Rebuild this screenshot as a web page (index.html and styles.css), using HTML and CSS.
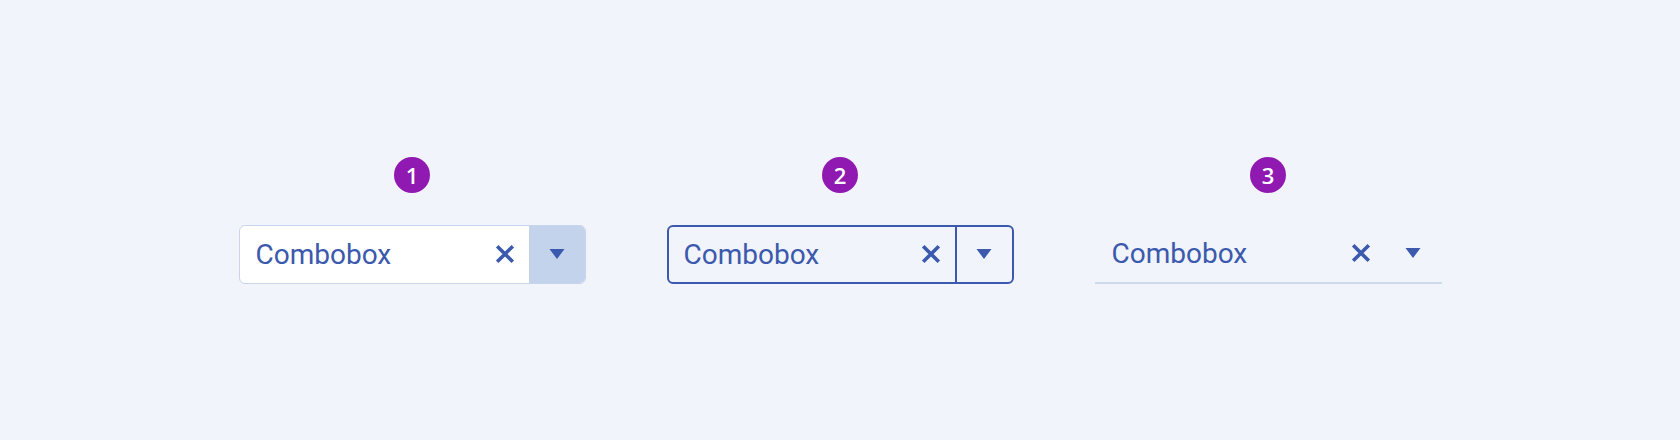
FILE: index.html
```html
<!DOCTYPE html>
<html lang="en">
<head>
<meta charset="utf-8">
<title>Combobox variants</title>
<link rel="stylesheet" href="styles.css">
</head>
<body>
<main class="stage">
  <section class="item">
    <span class="badge">1</span>
    <div class="combo combo--solid">
      <span class="combo__value">Combobox</span>
      <svg class="combo__clear" viewBox="0 0 20 20" width="20" height="20"><path d="M2.2 2.2 L17.8 17.8 M17.8 2.2 L2.2 17.8"/></svg>
      <span class="combo__toggle"><svg viewBox="0 0 16 10" width="16" height="10"><polygon points="0.5,0 15.5,0 8,10"/></svg></span>
    </div>
  </section>
  <section class="item">
    <span class="badge">2</span>
    <div class="combo combo--outline">
      <span class="combo__value">Combobox</span>
      <svg class="combo__clear" viewBox="0 0 20 20" width="20" height="20"><path d="M2.2 2.2 L17.8 17.8 M17.8 2.2 L2.2 17.8"/></svg>
      <span class="combo__toggle"><svg viewBox="0 0 16 10" width="16" height="10"><polygon points="0.5,0 15.5,0 8,10"/></svg></span>
    </div>
  </section>
  <section class="item">
    <span class="badge">3</span>
    <div class="combo combo--flat">
      <span class="combo__value">Combobox</span>
      <svg class="combo__clear" viewBox="0 0 20 20" width="20" height="20"><path d="M2.2 2.2 L17.8 17.8 M17.8 2.2 L2.2 17.8"/></svg>
      <span class="combo__toggle"><svg viewBox="0 0 16 10" width="16" height="10"><polygon points="0.5,0 15.5,0 8,10"/></svg></span>
    </div>
  </section>
</main>
</body>
</html>
```

FILE: styles.css
```css
html, body {
  margin: 0;
  padding: 0;
}

body {
  background: #f1f4fa;
  font-family: Roboto, "Liberation Sans", sans-serif;
}

.stage {
  height: 440px;
  display: flex;
  align-items: center;
  justify-content: center;
  gap: 81px;
}

.item {
  width: 347px;
  display: flex;
  flex-direction: column;
  align-items: center;
  gap: 32px;
}

.badge {
  width: 36px;
  height: 36px;
  border-radius: 50%;
  background: #9019b1;
  color: #ffffff;
  font-family: "Open Sans", "Noto Sans", sans-serif;
  font-size: 22px;
  font-weight: 600;
  line-height: 36px;
  text-align: center;
}

.combo {
  box-sizing: border-box;
  width: 347px;
  height: 59px;
  display: flex;
  align-items: stretch;
  color: #3b59ad;
}

.combo__value {
  flex: 1;
  display: flex;
  align-items: center;
  padding-left: 16px;
  padding-top: 1px;
  font-size: 28px;
  line-height: 1;
}

.combo__clear {
  align-self: center;
  margin-right: 14px;
  fill: none;
  stroke: #3b59ad;
  stroke-width: 3.6;
}

.combo__toggle {
  display: flex;
  align-items: center;
  justify-content: center;
}

.combo__toggle svg {
  fill: #3b59ad;
}

.combo--solid {
  background: #ffffff;
  border: 1px solid #c8d4ec;
  border-radius: 6px;
  overflow: hidden;
}

.combo--solid .combo__toggle {
  width: 56px;
  background: #c3d3ec;
}

.combo--outline {
  border: 2px solid #3b59ad;
  border-radius: 6px;
}

.combo--outline .combo__value {
  padding-left: 15px;
}

.combo--outline .combo__toggle {
  width: 55px;
  border-left: 2px solid #3b59ad;
}

.combo--flat {
  border-bottom: 2px solid #cfd9ec;
}

.combo--flat .combo__value {
  padding-left: 17px;
}

.combo--flat .combo__toggle {
  width: 57px;
}
```
